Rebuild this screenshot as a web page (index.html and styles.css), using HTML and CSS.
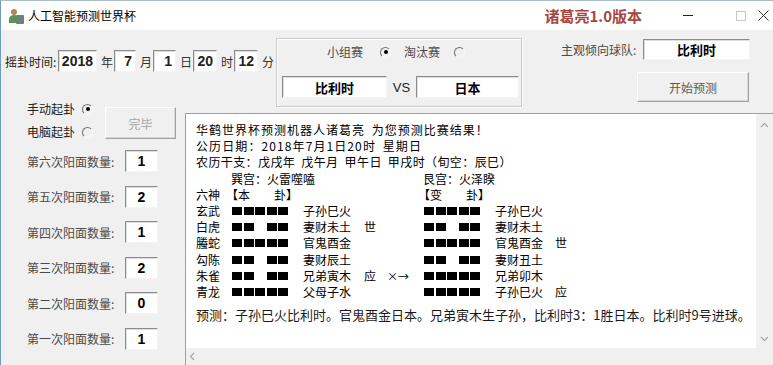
FILE: index.html
```html
<!DOCTYPE html>
<html lang="zh-CN">
<head>
  <meta charset="UTF-8">
  <title>人工智能预测世界杯</title>
  <link rel="stylesheet" href="styles.css">
</head>
<body>
<div class="window">
  <div class="titlebar">
    <svg class="app-icon" width="18" height="18" viewBox="0 0 18 18">
      <rect x="9" y="8" width="8" height="9" rx="1" fill="#6f7d8c"/>
      <circle cx="7" cy="5" r="3" fill="#b3865a"/>
      <path d="M2 16 v-4 a5 4 0 0 1 10 0 v4 z" fill="#5f8f5a"/>
    </svg>
    <span class="title">人工智能预测世界杯</span>
    <span class="brand">诸葛亮1.0版本</span>
    <div class="caps">
      <span class="cap-min"></span>
      <span class="cap-max"></span>
      <svg class="cap-close" width="11" height="11" viewBox="0 0 11 11">
        <path d="M0.5 0.5 L10.5 10.5 M10.5 0.5 L0.5 10.5" stroke="#333" stroke-width="1"/>
      </svg>
    </div>
  </div>

  <div class="client">
    <div class="top">
      <div class="time">
        <span class="time-label">摇卦时间:</span>
        <span class="box num w39">2018</span><span class="unit">年</span>
        <span class="box num w22">7</span><span class="unit">月</span>
        <span class="box num w23">1</span><span class="unit">日</span>
        <span class="box num w24">20</span><span class="unit">时</span>
        <span class="box num w24">12</span><span class="unit">分</span>
      </div>

      <div class="group">
        <div class="match-type">
          <span>小组赛</span><span class="radio on r1"></span>
          <span class="knockout">淘汰赛</span><span class="radio r2"></span>
        </div>
        <div class="teams">
          <span class="box team">比利时</span>
          <span class="vs">VS</span>
          <span class="box team team-b">日本</span>
        </div>
      </div>

      <div class="side">
        <div class="favor">
          <span class="favor-label">主观倾向球队:</span>
          <span class="box team fav">比利时</span>
        </div>
        <div class="btn start">开始预测</div>
      </div>
    </div>

    <div class="main">
      <div class="left">
        <div class="mode">
          <div class="mode-opts">
            <div class="opt">手动起卦<span class="radio on"></span></div>
            <div class="opt">电脑起卦<span class="radio"></span></div>
          </div>
          <div class="btn done">完毕</div>
        </div>
        <div class="counts">
          <div class="count"><span class="count-label">第六次阳面数量:</span><span class="box num">1</span></div>
          <div class="count"><span class="count-label">第五次阳面数量:</span><span class="box num">2</span></div>
          <div class="count"><span class="count-label">第四次阳面数量:</span><span class="box num">1</span></div>
          <div class="count"><span class="count-label">第三次阳面数量:</span><span class="box num">2</span></div>
          <div class="count"><span class="count-label">第二次阳面数量:</span><span class="box num">0</span></div>
          <div class="count"><span class="count-label">第一次阳面数量:</span><span class="box num">1</span></div>
        </div>
      </div>

      <div class="output">
        <div class="content">
          <div class="line l-head">华鹤世界杯预测机器人诸葛亮 为您预测比赛结果！</div>
          <div class="line l-date">公历日期：2018年7月1日20时 星期日</div>
          <div class="line l-lunar">农历干支：戊戌年 戊午月 甲午日 甲戌时（旬空：辰巳）</div>
          <div class="hex">
            <span class="c-gua1">巽宫：火雷噬嗑</span>
            <span class="c-gua2">艮宫：火泽睽</span>

            <span>六神</span>
            <span class="c-head1">【本　　卦】</span>
            <span class="c-head2">【变　　卦】</span>

            <span>玄武</span>
            <span class="yao"><i></i><i></i><i></i><i></i><i></i></span>
            <span>子孙巳火</span><span></span><span></span>
            <span class="yao"><i></i><i></i><i></i><i></i><i></i></span>
            <span>子孙巳火</span><span></span>

            <span>白虎</span>
            <span class="yao"><i></i><i></i><i class="gap"></i><i></i><i></i></span>
            <span>妻财未土</span><span>世</span><span></span>
            <span class="yao"><i></i><i></i><i class="gap"></i><i></i><i></i></span>
            <span>妻财未土</span><span></span>

            <span>螣蛇</span>
            <span class="yao"><i></i><i></i><i></i><i></i><i></i></span>
            <span>官鬼酉金</span><span></span><span></span>
            <span class="yao"><i></i><i></i><i></i><i></i><i></i></span>
            <span>官鬼酉金</span><span>世</span>

            <span>勾陈</span>
            <span class="yao"><i></i><i></i><i class="gap"></i><i></i><i></i></span>
            <span>妻财辰土</span><span></span><span></span>
            <span class="yao"><i></i><i></i><i class="gap"></i><i></i><i></i></span>
            <span>妻财丑土</span><span></span>

            <span>朱雀</span>
            <span class="yao"><i></i><i></i><i class="gap"></i><i></i><i></i></span>
            <span>兄弟寅木</span><span>应</span><span class="change">×→</span>
            <span class="yao"><i></i><i></i><i></i><i></i><i></i></span>
            <span>兄弟卯木</span><span></span>

            <span>青龙</span>
            <span class="yao"><i></i><i></i><i></i><i></i><i></i></span>
            <span>父母子水</span><span></span><span></span>
            <span class="yao"><i></i><i></i><i></i><i></i><i></i></span>
            <span>子孙巳火</span><span>应</span>
          </div>
          <div class="predict">预测：子孙巳火比利时。官鬼酉金日本。兄弟寅木生子孙，比利时3：1胜日本。比利时9号进球。</div>
        </div>
        <div class="vscroll">
          <svg width="9" height="6" viewBox="0 0 9 6"><path d="M1 5 L4.5 1.5 L8 5" fill="none" stroke="#a6a6a6" stroke-width="1.2"/></svg>
          <svg width="9" height="6" viewBox="0 0 9 6"><path d="M1 1 L4.5 4.5 L8 1" fill="none" stroke="#a6a6a6" stroke-width="1.2"/></svg>
        </div>
        <div class="hscroll">
          <svg width="6" height="9" viewBox="0 0 6 9"><path d="M5 1 L1.5 4.5 L5 8" fill="none" stroke="#a6a6a6" stroke-width="1.2"/></svg>
        </div>
        <div class="corner"></div>
      </div>
    </div>
  </div>
</div>
</body>
</html>
```

FILE: styles.css
```css
* {
  box-sizing: border-box;
}
body {
  margin: 0;
  font-family: "Noto Sans CJK SC", "Noto Sans", sans-serif;
  font-size: 12px;
  color: #000;
  background: #f0f0f0;
  overflow: hidden;
}
.window {
  width: 773px;
  height: 365px;
  border-left: 1px solid #6f9dc2;
  border-top: 1px solid #a9bfd1;
  background: #f0f0f0;
  display: flex;
  flex-direction: column;
}

/* title bar */
.titlebar {
  height: 29px;
  flex-shrink: 0;
  background: #fff;
  display: flex;
  align-items: center;
  padding-left: 6px;
}
.title {
  margin-left: 3px;
  font-size: 12px;
  line-height: 16px;
}
.brand {
  margin-left: auto;
  font-weight: bold;
  font-size: 15px;
  line-height: 18px;
  color: #a8463f;
}
.caps {
  width: 131px;
  display: flex;
  align-items: center;
}
.cap-min {
  margin-left: 41px;
  width: 10px;
  height: 1px;
  background: #222;
}
.cap-max {
  margin-left: 43px;
  width: 10px;
  height: 10px;
  border: 1px solid #c6c6c6;
}
.cap-close {
  margin-left: 12px;
}

/* client area */
.client {
  flex: 1;
  display: flex;
  flex-direction: column;
}
.top {
  height: 70px;
  flex-shrink: 0;
  display: flex;
  align-items: flex-start;
}
.time {
  margin-top: 20px;
  margin-left: 4px;
  width: 271px;
  height: 22px;
  display: flex;
  align-items: center;
  color: #222;
}
.time-label {
  width: 53px;
}
.unit {
  width: 17px;
  padding-left: 4px;
  color: #333;
}
.box {
  height: 22px;
  background: #fff;
  border: 1px solid;
  border-color: #8c8c8c #f4f4f4 #f4f4f4 #8c8c8c;
  box-shadow: inset 1px 1px 0 #dedede;
  display: flex;
  align-items: center;
  flex-shrink: 0;
}
.num {
  font-family: "Liberation Sans", Arial, sans-serif;
  font-weight: bold;
  font-size: 14px;
  justify-content: flex-end;
  padding-right: 3px;
}
.w39 { width: 39px; }
.w22 { width: 22px; }
.w23 { width: 23px; }
.w24 { width: 24px; }

.group {
  margin-top: 8px;
  width: 246px;
  height: 69px;
  border: 1px solid #cbcbcb;
  box-shadow: inset 1px 1px 0 #fff, 1px 1px 0 #fff;
  display: flex;
  flex-direction: column;
  padding-top: 6px;
}
.match-type {
  height: 14px;
  padding-left: 50px;
  display: flex;
  align-items: center;
  color: #4a4a4a;
  line-height: 14px;
}
.r1 { margin-left: 17px; }
.knockout { margin-left: 13px; }
.r2 { margin-left: 14px; }
.teams {
  margin-top: 17px;
  padding-left: 5px;
  display: flex;
  align-items: center;
}
.team {
  width: 105px;
  justify-content: center;
  font-weight: bold;
  font-size: 13px;
}
.team-b {
  width: 103px;
}
.vs {
  width: 29px;
  text-align: center;
  font-family: "Liberation Sans", Arial, sans-serif;
  font-size: 13px;
  color: #222;
}

.side {
  margin-left: 39px;
  margin-top: 9px;
}
.favor {
  height: 21px;
  display: flex;
  align-items: center;
}
.favor-label {
  width: 82px;
  color: #4a4a4a;
}
.fav {
  width: 107px;
  height: 21px;
}
.btn {
  display: flex;
  align-items: center;
  justify-content: center;
  background: #f0f0f0;
  border: 1px solid;
  border-color: #fff #a0a0a0 #a0a0a0 #fff;
  box-shadow: inset -1px -1px 0 #d8d8d8;
  font-size: 12px;
  color: #5a5a5a;
}
.start {
  margin-left: 76px;
  margin-top: 12px;
  width: 112px;
  height: 30px;
}

/* radios */
.radio {
  position: relative;
  width: 11px;
  height: 11px;
  border-radius: 50%;
  border: 1px solid;
  border-color: #6e6e6e #f8f8f8 #f8f8f8 #6e6e6e;
  flex-shrink: 0;
}
.radio.on::after {
  content: "";
  position: absolute;
  left: 2.5px;
  top: 2.5px;
  width: 4px;
  height: 4px;
  border-radius: 50%;
  background: #000;
}

/* lower part */
.main {
  flex: 1;
  min-height: 0;
  display: flex;
}
.left {
  width: 184px;
  flex-shrink: 0;
}
.mode {
  height: 41px;
  display: flex;
}
.mode-opts {
  margin-left: 26px;
  width: 66px;
  display: flex;
  flex-direction: column;
  gap: 5px;
}
.opt {
  height: 18px;
  line-height: 18px;
  display: flex;
  align-items: center;
  color: #222;
}
.opt .radio {
  margin-left: 7px;
}
.done {
  margin-left: 12px;
  margin-top: 7px;
  width: 71px;
  height: 32px;
  color: #a6a6a6;
}
.counts {
  margin-top: 9px;
  display: flex;
  flex-direction: column;
  gap: 13.6px;
}
.count {
  height: 22px;
  padding-left: 26px;
  display: flex;
  align-items: center;
}
.count-label {
  width: 98px;
  color: #4a4a4a;
}
.count .box {
  width: 33px;
  justify-content: center;
  padding: 0;
}

.output {
  margin-top: 13px;
  flex: 1;
  display: grid;
  grid-template-columns: 1fr 17px;
  grid-template-rows: 1fr 17px;
  border-top: 1px solid #a0a0a0;
  border-left: 1px solid #a0a0a0;
}
.content {
  background: #fff;
  padding: 8px 0 0 10px;
  overflow: hidden;
  font-size: 12px;
  line-height: 16.2px;
  white-space: nowrap;
}
.line {
  word-spacing: 3px;
}
.l-head { letter-spacing: 1px; }
.l-date { letter-spacing: 1.1px; }
.l-lunar { letter-spacing: 0.4px; }
.hex {
  display: grid;
  grid-template-columns: 35px 72px 61px 23px 36px 72px 60px 40px;
  grid-auto-rows: 16.2px;
  align-items: center;
}
.c-gua1 { grid-column: 2 / 6; }
.c-gua2 { grid-column: 6 / 9; }
.c-head1 { grid-column: 2 / 6; margin-left: -5px; }
.c-head2 { grid-column: 6 / 9; margin-left: -5px; }
.yao {
  display: flex;
  gap: 1.5px;
  margin-left: 1px;
}
.yao i {
  width: 10px;
  height: 8px;
  background: #000;
}
.yao i.gap {
  background: transparent;
}
.change {
  font-size: 11px;
}
.predict {
  margin-top: 6px;
  font-size: 13px;
  line-height: 18px;
  color: #1a1a1a;
}
.vscroll {
  background: #f0f0f0;
  display: flex;
  flex-direction: column;
  justify-content: space-between;
  align-items: center;
  padding: 8px 0 6px;
}
.hscroll {
  background: #f0f0f0;
  display: flex;
  align-items: center;
  padding-left: 3px;
}
.corner {
  background: #f0f0f0;
}
```
